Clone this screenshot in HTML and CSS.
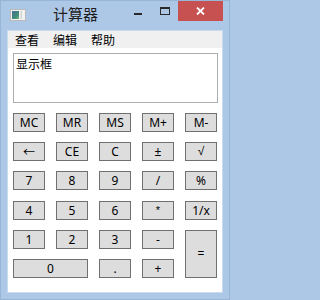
FILE: index.html
```html
<!DOCTYPE html>
<html lang="zh">
<head>
<meta charset="utf-8">
<title>计算器</title>
<link rel="stylesheet" href="styles.css">
</head>
<body>
<div class="window">
  <div class="titlebar">
    <svg class="app-icon" width="16" height="12" viewBox="0 0 16 12">
      <defs>
        <linearGradient id="ig" x1="0" y1="0" x2="1" y2="1">
          <stop offset="0" stop-color="#4a6f96"/>
          <stop offset="0.6" stop-color="#3f8a7a"/>
          <stop offset="1" stop-color="#6cb27a"/>
        </linearGradient>
      </defs>
      <rect x="0.5" y="0.5" width="15" height="11" fill="#f2f2f2" stroke="#b9b9b9"/>
      <rect x="2" y="2" width="7" height="8" fill="url(#ig)"/>
      <rect x="10.5" y="2" width="1.5" height="8" fill="#cfd6d3"/>
    </svg>
    <span class="title">计算器</span>
    <span class="spacer"></span>
    <span class="tbtn tbtn-min"><span class="min-glyph"></span></span>
    <span class="tbtn tbtn-max"><span class="max-glyph"></span></span>
    <span class="tbtn tbtn-close">
      <svg width="9" height="8" viewBox="0 0 9 8">
        <path d="M1 0.5 L8 7.5 M8 0.5 L1 7.5" stroke="#fff" stroke-width="1.8" fill="none"/>
      </svg>
    </span>
  </div>
  <div class="client">
    <div class="menubar">
      <span class="menu-item">查看</span>
      <span class="menu-item">编辑</span>
      <span class="menu-item">帮助</span>
    </div>
    <div class="display">显示框</div>
    <div class="keys">
      <button class="key">MC</button>
      <button class="key">MR</button>
      <button class="key">MS</button>
      <button class="key">M+</button>
      <button class="key">M-</button>

      <button class="key key-arrow">←</button>
      <button class="key">CE</button>
      <button class="key">C</button>
      <button class="key">±</button>
      <button class="key key-sym">√</button>

      <button class="key">7</button>
      <button class="key">8</button>
      <button class="key">9</button>
      <button class="key">/</button>
      <button class="key">%</button>

      <button class="key">4</button>
      <button class="key">5</button>
      <button class="key">6</button>
      <button class="key key-star">*</button>
      <button class="key">1/x</button>

      <button class="key">1</button>
      <button class="key">2</button>
      <button class="key">3</button>
      <button class="key">-</button>
      <button class="key key-tall">=</button>

      <button class="key key-wide">0</button>
      <button class="key">.</button>
      <button class="key">+</button>
    </div>
  </div>
</div>
</body>
</html>
```
FILE: styles.css
```css
html, body {
  margin: 0;
  padding: 0;
  background: #adc8e6;
}

.window {
  width: 230px;
  height: 300px;
  box-sizing: border-box;
  background: #adc8e6;
  border: 1px solid #97b5d6;
  padding: 0 6px 6px 6px;
  display: flex;
  flex-direction: column;
  font-family: "Noto Sans", "Noto Sans CJK SC", sans-serif;
}

.titlebar {
  height: 29px;
  display: flex;
  align-items: flex-start;
  flex: none;
}

.app-icon {
  margin: 8px 0 0 3px;
  flex: none;
}

.title {
  margin: 3px 0 0 27px;
  font-family: "Noto Sans CJK SC", sans-serif;
  font-size: 15px;
  line-height: 20px;
  color: #1e1e1e;
}

.spacer {
  flex: 1;
}

.tbtn {
  height: 20px;
  display: flex;
  justify-content: center;
  flex: none;
}

.tbtn-min {
  width: 27px;
  align-items: flex-start;
}

.min-glyph {
  margin-top: 12px;
  width: 8px;
  height: 2px;
  background: #2a2a2a;
}

.tbtn-max {
  width: 27px;
  align-items: flex-start;
}

.max-glyph {
  margin-top: 6px;
  width: 10px;
  height: 8px;
  box-sizing: border-box;
  border: 1px solid #2a2a2a;
  border-top-width: 2px;
}

.tbtn-close {
  width: 45px;
  background: #c75050;
  align-items: center;
}

.tbtn-close svg {
  display: block;
}

.client {
  flex: 1;
  background: #ffffff;
  border: 1px solid #c9dbee;
  display: flex;
  flex-direction: column;
}

.menubar {
  height: 17px;
  background: #f0f0f0;
  display: flex;
  flex: none;
}

.menu-item {
  padding: 0 7px;
  font-family: "Noto Sans CJK SC", sans-serif;
  font-size: 12px;
  line-height: 17px;
  color: #000;
}

.display {
  margin: 5px 4px 0 5px;
  height: 50px;
  box-sizing: border-box;
  border: 1px solid #abadb3;
  padding: 2px 2px;
  font-family: "Noto Sans CJK SC", sans-serif;
  font-size: 12px;
  line-height: 16px;
  color: #000;
  flex: none;
}

.keys {
  margin: 10px 0 0 5px;
  display: grid;
  grid-template-columns: repeat(5, 32px);
  grid-auto-rows: 19px;
  column-gap: 11px;
  row-gap: 10.2px;
}

.key {
  appearance: none;
  -webkit-appearance: none;
  margin: 0;
  padding: 0;
  border: 1px solid #707070;
  background: #dddddd;
  border-radius: 0;
  font-family: "Noto Sans", "Noto Sans CJK SC", sans-serif;
  font-size: 12px;
  line-height: 17px;
  color: #000;
  text-align: center;
}

.key-arrow {
  font-family: "Noto Sans CJK SC", sans-serif;
}

.key-sym {
  font-family: "Liberation Sans", "DejaVu Sans", sans-serif;
}

.key-star {
  font-family: "Liberation Sans", sans-serif;
  font-size: 11px;
}

.key-tall {
  grid-row: span 2;
}

.key-wide {
  grid-column: span 2;
}
```
